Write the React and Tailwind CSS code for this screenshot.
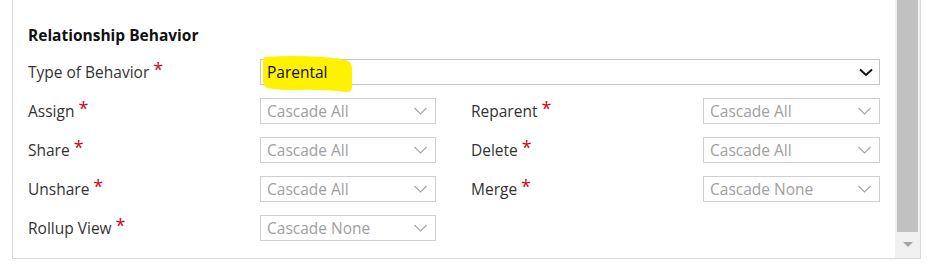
import React from "react";

const font = { fontFamily: '"Open Sans", "Noto Sans", sans-serif' };

function Chevron({ dark }) {
  return dark ? (
    <svg width="14" height="9" viewBox="0 0 14 9" className="shrink-0">
      <path d="M1 1.5 L7 7 L13 1.5" fill="none" stroke="#111" strokeWidth="2" />
    </svg>
  ) : (
    <svg width="13" height="8" viewBox="0 0 13 8" className="shrink-0">
      <path d="M0.5 1 L6.5 7 L12.5 1" fill="none" stroke="#a6a6a6" strokeWidth="1.2" />
    </svg>
  );
}

function Label({ text }) {
  return (
    <div className="flex items-center h-[26px] text-[15.5px] text-[#333] whitespace-nowrap">
      <span className="relative top-[1px]">{text}</span>
      <span className="ml-[4px] text-[#d0021b] text-[18px] leading-none relative -top-[3px]">*</span>
    </div>
  );
}

function SmallSelect({ value }) {
  return (
    <div className="flex items-center justify-between h-[26px] border border-[#cfcfcf] bg-white pl-[6px] pr-[8px] text-[15.5px] text-[#a0a0a0]">
      <span className="whitespace-nowrap relative top-[1px]">{value}</span>
      <Chevron />
    </div>
  );
}

function Row({ label, value, w }) {
  return (
    <div className={w ? "grid grid-cols-[232px_177px]" : "grid grid-cols-[232px_176px]"}>
      <Label text={label} />
      <SmallSelect value={value} />
    </div>
  );
}

export default function App() {
  return (
    <div className="w-[928px] h-[267px] bg-white relative" style={font}>
      <div className="ml-[12px] w-[909px] h-[259px] border-l border-r border-b border-[#d9d9d9] flex">
        <div className="flex-1 pl-[15px] pt-[25px]">
          <div className="text-[15.5px] font-bold text-[#111] leading-[20px]">Relationship Behavior</div>
          <div className="mt-[14px] grid grid-cols-[232px_620px]">
            <Label text="Type of Behavior" />
            <div className="relative flex items-center justify-between h-[26px] border border-[#c4c4c4] bg-white pl-[6px] pr-[6px] text-[15.5px] text-[#111]">
              <svg
                className="absolute left-[1px] -top-[6px]"
                width="92"
                height="40"
                viewBox="0 0 92 40"
              >
                <path
                  d="M3 3 Q 30 1 60 3 Q 80 4 86 7 Q 90 9 90 14 L 90 33 Q 90 39 84 38 Q 60 35 30 36 Q 8 36 4 33 Q 1 31 1 27 L 1 8 Q 1 3 3 3 Z"
                  fill="#fff200"
                />
              </svg>
              <span className="relative top-[1px]">Parental</span>
              <Chevron dark />
            </div>
          </div>
          <div className="mt-[13px] flex gap-[35px]">
            <div className="flex flex-col gap-[13px]">
              <Row label="Assign" value="Cascade All" />
              <Row label="Share" value="Cascade All" />
              <Row label="Unshare" value="Cascade All" />
              <Row label="Rollup View" value="Cascade None" />
            </div>
            <div className="flex flex-col gap-[13px]">
              <Row label="Reparent" value="Cascade All" w />
              <Row label="Delete" value="Cascade All" w />
              <Row label="Merge" value="Cascade None" w />
            </div>
          </div>
        </div>
        <div className="w-[25px] h-[258px] bg-[#f0f0f0] flex flex-col pl-[2px] pr-[2px]">
          <div className="h-[232px] bg-[#c1c1c1]" />
          <div className="flex-1 flex items-center justify-center">
            <svg width="10" height="6" viewBox="0 0 10 6">
              <path d="M0 0 L10 0 L5 5 Z" fill="#a3a3a3" />
            </svg>
          </div>
        </div>
      </div>
    </div>
  );
}
